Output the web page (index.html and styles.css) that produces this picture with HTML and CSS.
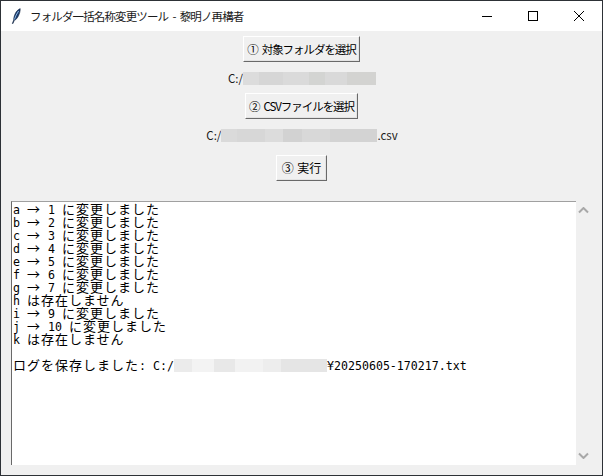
FILE: index.html
```html
<!DOCTYPE html>
<html lang="ja">
<head>
<meta charset="utf-8">
<title>フォルダ一括名称変更ツール - 黎明ノ再構者</title>
<link rel="stylesheet" href="styles.css">
</head>
<body>
<div class="window">
  <header class="titlebar">
    <svg class="app-icon" width="16" height="16" viewBox="0 0 16 16"><path d="M12.200 .6C10 1.400 7.800 3.800 6.800 6.600 6 8.800 5.500 10.600 5.700 12L4.300 15.400l.6.300L6.400 12.300C8 11.800 9.400 10 10.400 8c1.200-2.300 2-5 1.800-7.400z" fill="#1a3a6b" stroke="#0c1c36" stroke-width=".5"/><path d="M10.600 3C8.800 5.500 7.400 8.500 6.400 11.500" stroke="#8db8e4" stroke-width="1" fill="none"/></svg>
    <span class="title">フォルダ一括名称変更ツール - 黎明ノ再構者</span>
    <div class="controls">
      <span class="ctl"><svg width="10" height="10" viewBox="0 0 10 10"><path d="M0 5.500h10" stroke="#000"/></svg></span>
      <span class="ctl"><svg width="10" height="10" viewBox="0 0 10 10"><rect x=".5" y=".5" width="9" height="9" fill="none" stroke="#000"/></svg></span>
      <span class="ctl"><svg width="10" height="10" viewBox="0 0 10 10"><path d="M0 0l10 10M10 0L0 10" stroke="#000" stroke-width="1"/></svg></span>
    </div>
  </header>
  <main class="content">
    <button class="btn btn-one">① 対象フォルダを選択</button>
    <div class="path path-one"><span>C:/</span><span class="blur blur-one"></span></div>
    <button class="btn btn-two">② CSVファイルを選択</button>
    <div class="path path-two"><span>C:/</span><span class="blur blur-two"></span><span>.csv</span></div>
    <button class="btn btn-three">③ 実行</button>
    <div class="log-row">
      <div class="log">
        <div><i>a </i>→<i> 1 </i>に変更しました</div>
        <div><i>b </i>→<i> 2 </i>に変更しました</div>
        <div><i>c </i>→<i> 3 </i>に変更しました</div>
        <div><i>d </i>→<i> 4 </i>に変更しました</div>
        <div><i>e </i>→<i> 5 </i>に変更しました</div>
        <div><i>f </i>→<i> 6 </i>に変更しました</div>
        <div><i>g </i>→<i> 7 </i>に変更しました</div>
        <div><i>h </i>は存在しません</div>
        <div><i>i </i>→<i> 9 </i>に変更しました</div>
        <div><i>j </i>→<i> 10 </i>に変更しました</div>
        <div><i>k </i>は存在しません</div>
        <div class="blank"></div>
        <div class="saved">ログを保存しました<i>: C:/</i><span class="blur blur-log"></span><i>¥20250605-170217.txt</i></div>
      </div>
      <div class="scrollbar">
        <svg width="11" height="7" viewBox="0 0 11 7"><path d="M1 5.500l4.500-4.500 4.500 4.500" fill="none" stroke="#a8a8a8" stroke-width="2"/></svg>
        <svg width="11" height="7" viewBox="0 0 11 7"><path d="M1 1.500l4.500 4.500 4.500-4.500" fill="none" stroke="#a8a8a8" stroke-width="2"/></svg>
      </div>
    </div>
  </main>
</div>
</body>
</html>
```
FILE: styles.css
```css
html, body { margin: 0; padding: 0; }
body { width: 603px; height: 476px; overflow: hidden; background: #f0f0f0; }
.window {
  box-sizing: border-box;
  width: 603px;
  height: 476px;
  border: 1px solid #2d3136;
  display: flex;
  flex-direction: column;
  font-family: "Noto Sans CJK JP", "Noto Sans", sans-serif;
  color: #111;
}
.titlebar {
  height: 30px;
  flex: none;
  background: #fff;
  display: flex;
  align-items: center;
  padding-left: 7px;
}
.app-icon { flex: none; }
.title { margin-left: 6px; font-size: 11.5px; letter-spacing: -0.87px; word-spacing: 2.5px; line-height: 30px; color: #1a1a1a; white-space: nowrap; }
.controls { margin-left: auto; display: flex; }
.ctl { width: 46px; height: 30px; display: flex; align-items: center; justify-content: center; }
.content {
  flex: 1;
  min-height: 0;
  background: #f0f0f0;
  display: flex;
  flex-direction: column;
  align-items: center;
  padding-top: 5px;
}
.btn {
  box-sizing: border-box;
  height: 26px;
  padding: 0;
  background: #f0f0f0;
  border: 1px solid;
  border-color: #fff #696969 #696969 #fff;
  box-shadow: inset -1px -1px 0 #e3e3e3;
  font-family: inherit;
  font-size: 11.5px;
  letter-spacing: -1.05px;
  word-spacing: 2.5px;
  line-height: 22px;
  color: #000;
  white-space: nowrap;
}
.btn-one { width: 117px; }
.btn-two { width: 113px; }
.btn-three { width: 51px; font-size: 12px; letter-spacing: 0; word-spacing: 1px; }
.path {
  display: flex;
  align-items: center;
  height: 13px;
  font-size: 11.5px;
  line-height: 13px;
  color: #1a1a1a;
}
.path-one { margin: 10px 0 8px 1px; }
.path-two { margin: 10px 0 13px 1px; }
.blur { display: inline-block; height: 13px; }
.blur-one {
  width: 133px;
  background: linear-gradient(90deg, #dcdcdc 0 12%, #d6d6d6 12% 30%, #dadada 30% 50%, #d3d4d2 50% 62%, #d9d9d9 62% 78%, #d3d3d1 78% 100%);
}
.blur-two {
  width: 156px;
  background: linear-gradient(90deg, #dadada 0 10%, #d7d7d7 10% 28%, #dcdcdc 28% 40%, #d2d2d2 40% 52%, #d8d8d8 52% 70%, #d3d3d3 70% 100%);
}
.log-row {
  align-self: stretch;
  flex: 1;
  min-height: 0;
  display: flex;
  margin: 20px 0 10px 10px;
}
.log {
  box-sizing: border-box;
  width: 565px;
  background: #fff;
  border-top: 1px solid #a0a0a0;
  border-left: 1px solid #696969;
  padding: 0 0 0 1px;
  font-size: 13px;
  letter-spacing: 1px;
  line-height: 13px;
  color: #000;
  overflow: hidden;
}
.log div { height: 13px; white-space: pre; }
.log i {
  font-style: normal;
  font-family: "DejaVu Sans Mono", monospace;
  font-size: 11.62px;
  letter-spacing: 0;
}
.blur-log {
  width: 153px;
  vertical-align: top;
  margin-top: 1px;
  background: linear-gradient(90deg, #ebebeb 0 12%, #f3f3f3 12% 26%, #e8e8e8 26% 40%, #f2f2f2 40% 58%, #ededed 58% 70%, #e5e5e5 70% 100%);
}
.scrollbar {
  width: 15px;
  display: flex;
  flex-direction: column;
  justify-content: space-between;
  align-items: center;
  padding: 6px 0;
}
```
